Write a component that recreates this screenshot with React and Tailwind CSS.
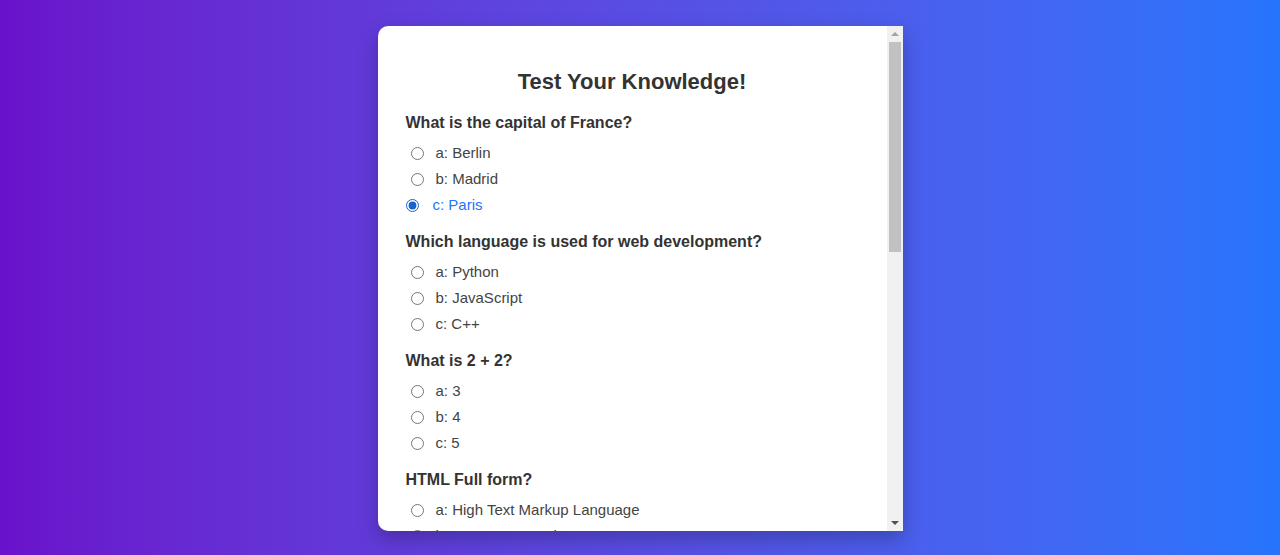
import { useState } from 'react';

const questions = [
    { q: 'What is the capital of France?', options: ['Berlin', 'Madrid', 'Paris'] },
    { q: 'Which language is used for web development?', options: ['Python', 'JavaScript', 'C++'] },
    { q: 'What is 2 + 2?', options: ['3', '4', '5'] },
    { q: 'HTML Full form?', options: ['High Text Markup Language', 'Hyper Text Markup Language', 'Hyper Tool Markup Language'] },
    { q: 'Which planet is known as the Red Planet?', options: ['Earth', 'Mars', 'Jupiter'] },
    { q: 'CSS stands for?', options: ['Cascading Style Sheets', 'Creative Style Sheets', 'Computer Style Sheets'] },
    { q: 'What is the largest ocean?', options: ['Atlantic', 'Indian', 'Pacific'] },
    { q: 'Which company created React?', options: ['Google', 'Facebook', 'Microsoft'] },
];

const letters = ['a', 'b', 'c'];

function App() {
    const [answers, setAnswers] = useState({ 0: 2 });

    return (
        <div
            className="h-[555px] flex items-center justify-center bg-gradient-to-r from-[#6a11cb] to-[#2575fc]"
            style={{ fontFamily: '"Liberation Sans", Arial, sans-serif' }}
        >
            <div className="mt-[2px] w-[525px] h-[505px] flex bg-white rounded-l-[10px] shadow-[0_8px_20px_rgba(0,0,0,0.25)] overflow-hidden">
                <div className="flex-1 overflow-hidden">
                    <div className="pl-[28px] pr-[28px] pt-[43px] pb-[30px]">
                        <h2 className="text-[22px] leading-[26px] font-bold text-[#333] text-center mb-[18px]">
                            Test Your Knowledge!
                        </h2>

                        {questions.map((item, qi) => (
                            <div key={qi} className="mb-[14px]">
                                <p className="text-[16px] leading-[20px] font-bold text-[#333] mb-[7px]">{item.q}</p>
                                {item.options.map((opt, oi) => {
                                    const selected = answers[qi] === oi;
                                    return (
                                        <label
                                            key={oi}
                                            className={`flex items-center h-[26px] text-[15px] cursor-pointer ${
                                                selected ? 'text-[#2575fc]' : 'text-[#444]'
                                            }`}
                                        >
                                            <input
                                                type="radio"
                                                name={`q${qi}`}
                                                checked={selected}
                                                onChange={() => setAnswers({ ...answers, [qi]: oi })}
                                                className={`w-[13px] h-[13px] m-0 accent-[#1a62d2] ${
                                                    selected ? 'ml-0 mr-[14px]' : 'ml-[5px] mr-[12px]'
                                                }`}
                                            />
                                            {letters[oi]}: {opt}
                                        </label>
                                    );
                                })}
                            </div>
                        ))}

                        <button className="mt-[10px] w-full bg-[#2575fc] text-white text-[16px] py-[10px] rounded-[6px]">
                            Submit
                        </button>
                    </div>
                </div>

                {/* scrollbar */}
                <div className="w-[16px] flex flex-col bg-[#f1f1f1]">
                    <div className="h-[16px] flex items-center justify-center">
                        <div className="w-0 h-0 border-l-[4px] border-r-[4px] border-b-[4px] border-l-transparent border-r-transparent border-b-[#a3a3a3]" />
                    </div>
                    <div className="mx-[2px] h-[210px] bg-[#c1c1c1]" />
                    <div className="flex-1" />
                    <div className="h-[16px] flex items-center justify-center">
                        <div className="w-0 h-0 border-l-[4px] border-r-[4px] border-t-[4px] border-l-transparent border-r-transparent border-t-[#505050]" />
                    </div>
                </div>
            </div>
        </div>
    );
}

export default App;
